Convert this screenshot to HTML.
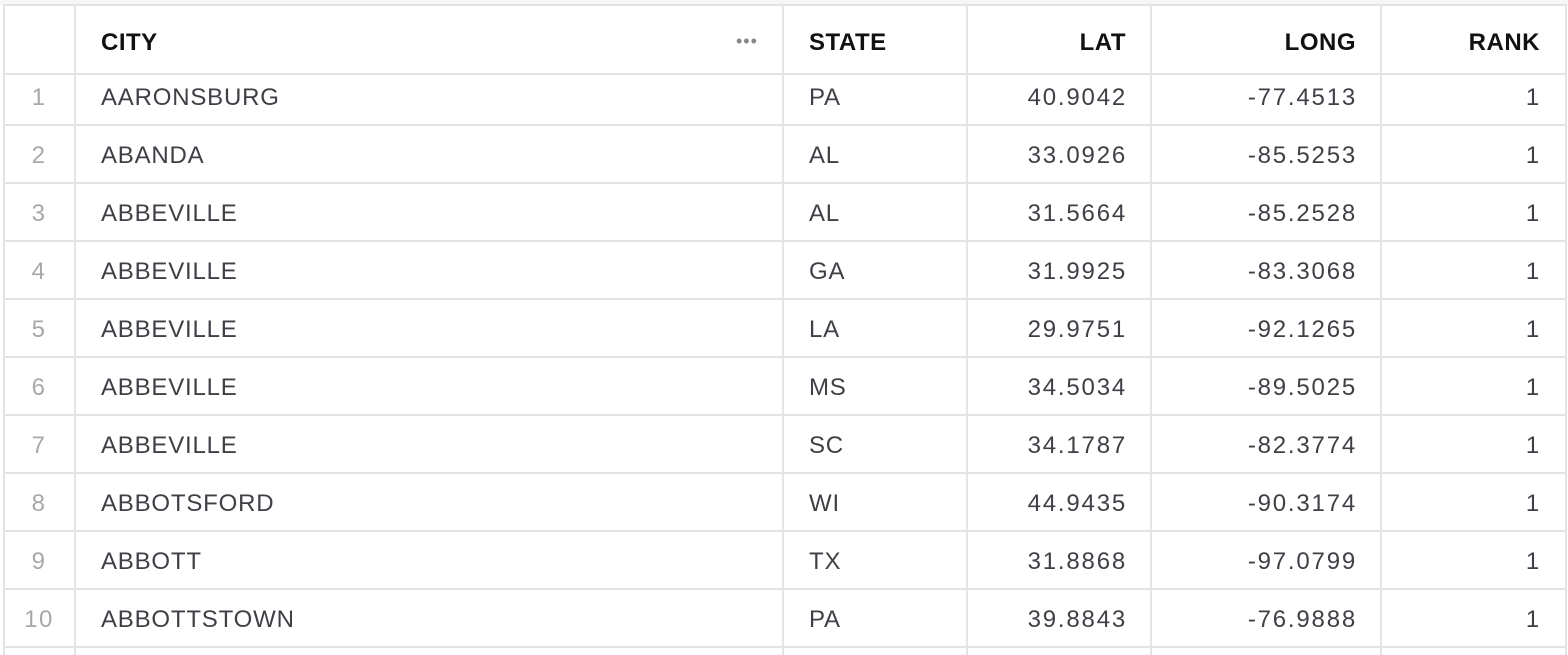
<!DOCTYPE html><html><head><style>
body{margin:0;width:1568px;height:650px;background:#fff;position:relative;overflow:hidden;font-family:"Liberation Sans",Arial,sans-serif}
.h{position:absolute;left:4px;width:1563px;height:2px;background:#e3e3e3}
.v{position:absolute;top:5px;height:650px;width:2px;background:#e3e3e3}
.t{position:absolute;font-size:24px;color:#3f3f46;line-height:30px;white-space:nowrap;letter-spacing:0.8px}
.n{letter-spacing:1.8px}
.b{font-weight:bold;color:#111;letter-spacing:0.5px}
.r{text-align:right}
.i{color:#a8a8a8;text-align:center;width:70px;left:4px;letter-spacing:1.5px}
</style></head><body>
<div style="position:absolute;left:0;top:0;width:1568px;height:5px;background:#f6f6f6"></div>
<div class="h" style="top:4px"></div>
<div class="h" style="top:73px"></div>
<div class="h" style="top:124px"></div>
<div class="h" style="top:182px"></div>
<div class="h" style="top:240px"></div>
<div class="h" style="top:298px"></div>
<div class="h" style="top:356px"></div>
<div class="h" style="top:414px"></div>
<div class="h" style="top:472px"></div>
<div class="h" style="top:530px"></div>
<div class="h" style="top:588px"></div>
<div class="h" style="top:646px"></div>
<div class="v" style="left:3px"></div>
<div class="v" style="left:74px"></div>
<div class="v" style="left:782px"></div>
<div class="v" style="left:966px"></div>
<div class="v" style="left:1150px"></div>
<div class="v" style="left:1380px"></div>
<div class="v" style="left:1565px"></div>
<div class="t b" style="left:101px;top:28px">CITY</div>
<div class="t" style="left:736px;top:26px;color:#888;font-size:18px;letter-spacing:1px">•••</div>
<div class="t b" style="left:809px;top:28px">STATE</div>
<div class="t b r" style="right:442px;top:28px">LAT</div>
<div class="t b r" style="right:212px;top:28px">LONG</div>
<div class="t b r" style="right:28px;top:28px">RANK</div>
<div id="rows"></div>
<script>
var d=[["AARONSBURG","PA","40.9042","-77.4513"],["ABANDA","AL","33.0926","-85.5253"],["ABBEVILLE","AL","31.5664","-85.2528"],["ABBEVILLE","GA","31.9925","-83.3068"],["ABBEVILLE","LA","29.9751","-92.1265"],["ABBEVILLE","MS","34.5034","-89.5025"],["ABBEVILLE","SC","34.1787","-82.3774"],["ABBOTSFORD","WI","44.9435","-90.3174"],["ABBOTT","TX","31.8868","-97.0799"],["ABBOTTSTOWN","PA","39.8843","-76.9888"]];
var h="";d.forEach(function(r,k){var y=83+k*58;
h+='<div class="t i" style="top:'+y+'px">'+(k+1)+'</div><div class="t" style="left:101px;top:'+y+'px">'+r[0]+'</div><div class="t" style="left:809px;top:'+y+'px">'+r[1]+'</div><div class="t r n" style="right:441px;top:'+y+'px">'+r[2]+'</div><div class="t r n" style="right:211px;top:'+y+'px">'+r[3]+'</div><div class="t r" style="right:28px;top:'+y+'px">1</div>';});
document.getElementById("rows").innerHTML=h;
</script>
</body></html>
